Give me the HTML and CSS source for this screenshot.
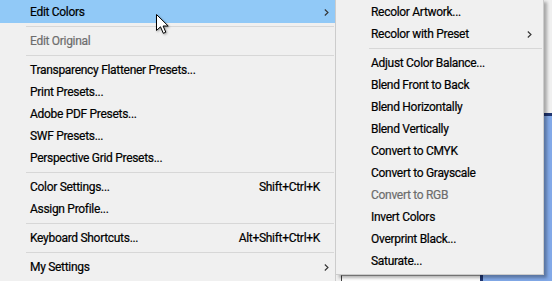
FILE: index.html
```html
<!DOCTYPE html>
<html lang="en">
<head>
    <meta charset="UTF-8">
    <title>Edit menu</title>
    <link rel="stylesheet" href="styles.css">
</head>
<body>
    <div class="desk">
        <div class="desk-box"></div>
        <div class="desk-panel"></div>
    </div>

    <div class="menu main-menu">
        <div class="item first active"><span class="label">Edit Colors</span><span class="key"></span><span class="arrow"><svg width="5" height="7" viewBox="0 0 5 7"><path d="M0.8 0.5 L4 3.5 L0.8 6.5" /></svg></span></div>
        <div class="sep"></div>
        <div class="item disabled"><span class="label">Edit Original</span><span class="key"></span><span class="arrow"></span></div>
        <div class="sep"></div>
        <div class="item"><span class="label">Transparency Flattener Presets...</span><span class="key"></span><span class="arrow"></span></div>
        <div class="item"><span class="label">Print Presets...</span><span class="key"></span><span class="arrow"></span></div>
        <div class="item"><span class="label">Adobe PDF Presets...</span><span class="key"></span><span class="arrow"></span></div>
        <div class="item"><span class="label">SWF Presets...</span><span class="key"></span><span class="arrow"></span></div>
        <div class="item"><span class="label">Perspective Grid Presets...</span><span class="key"></span><span class="arrow"></span></div>
        <div class="sep"></div>
        <div class="item"><span class="label">Color Settings...</span><span class="key">Shift+Ctrl+K</span><span class="arrow"></span></div>
        <div class="item"><span class="label">Assign Profile...</span><span class="key"></span><span class="arrow"></span></div>
        <div class="sep"></div>
        <div class="item"><span class="label">Keyboard Shortcuts...</span><span class="key">Alt+Shift+Ctrl+K</span><span class="arrow"></span></div>
        <div class="sep"></div>
        <div class="item"><span class="label">My Settings</span><span class="key"></span><span class="arrow"><svg width="5" height="7" viewBox="0 0 5 7"><path d="M0.8 0.5 L4 3.5 L0.8 6.5" /></svg></span></div>
    </div>

    <div class="menu sub-menu">
        <div class="item"><span class="label">Recolor Artwork...</span><span class="arrow"></span></div>
        <div class="item"><span class="label">Recolor with Preset</span><span class="arrow"><svg width="5" height="7" viewBox="0 0 5 7"><path d="M0.8 0.5 L4 3.5 L0.8 6.5" /></svg></span></div>
        <div class="sep"></div>
        <div class="item"><span class="label">Adjust Color Balance...</span><span class="arrow"></span></div>
        <div class="item"><span class="label">Blend Front to Back</span><span class="arrow"></span></div>
        <div class="item"><span class="label">Blend Horizontally</span><span class="arrow"></span></div>
        <div class="item"><span class="label">Blend Vertically</span><span class="arrow"></span></div>
        <div class="item"><span class="label">Convert to CMYK</span><span class="arrow"></span></div>
        <div class="item"><span class="label">Convert to Grayscale</span><span class="arrow"></span></div>
        <div class="item disabled"><span class="label">Convert to RGB</span><span class="arrow"></span></div>
        <div class="item"><span class="label">Invert Colors</span><span class="arrow"></span></div>
        <div class="item"><span class="label">Overprint Black...</span><span class="arrow"></span></div>
        <div class="item"><span class="label">Saturate...</span><span class="arrow"></span></div>
    </div>

    <svg class="cursor" width="14" height="21" viewBox="0 0 14 21">
        <path d="M0.5 0.5 V16.5 L4.5 12.8 L7.3 19.3 L9.8 18.2 L7.1 12 H12.2 Z" />
    </svg>
</body>
</html>
```

FILE: styles.css
```css
* {
    box-sizing: border-box;
}

html, body {
    margin: 0;
    height: 100%;
}

body {
    position: relative;
    overflow: hidden;
    font-family: Roboto, "Liberation Sans", sans-serif;
    font-size: 12px;
    letter-spacing: -0.3px;
    color: #000;
    background: #f0f0f0;
    -webkit-text-stroke: 0.2px currentColor;
}

/* window underneath the menus */
.desk {
    display: grid;
    grid-template-columns: 341px 139px 1fr;
    grid-template-rows: 113px 162px 1fr;
    height: 100%;
}

.desk-box {
    grid-column: 2;
    grid-row: 3;
    background: #fff;
    border-top: 1px solid #a0a0a0;
    border-left: 1px solid #404040;
}

.desk-panel {
    grid-column: 3;
    grid-row: 2 / 4;
    background: #82a9e8;
    border-top: 3px solid #1f3570;
    border-left: 3px solid #1f3570;
}

/* menus */
.menu {
    position: absolute;
    top: 0;
    background: #f0f0f0;
}

.main-menu {
    left: 0;
    width: 336px;
    height: 100%;
    border-right: 1px solid #cccccc;
}

.sub-menu {
    left: 336px;
    top: -1px;
    width: 208px;
    height: 276px;
    padding-top: 1px;
    border: 1px solid #cccccc;
    border-left: none;
    box-shadow: 3px 3px 3px rgba(0, 0, 0, 0.3);
}

.item {
    display: flex;
    align-items: center;
    height: 22px;
    padding-left: 30px;
    padding-right: 6px;
    white-space: nowrap;
}

.sub-menu .item {
    padding-left: 35px;
    padding-right: 11px;
}

.item.first {
    height: 23px;
    padding-top: 1px;
}

.item.active {
    background: #91c9f7;
}

.item.disabled {
    color: #6d6d6d;
}

.label {
    flex: 1;
}

.arrow {
    display: flex;
    width: 5px;
    margin-left: 4px;
}

.arrow svg path {
    fill: none;
    stroke: #333;
    stroke-width: 1.1;
}

.sep {
    height: 0;
    margin: 3px 1px 3px 26px;
    border-top: 1px solid #d7d7d7;
}

.sub-menu .sep {
    margin-left: 33px;
}

.cursor {
    position: absolute;
    left: 156px;
    top: 14px;
    filter: drop-shadow(1px 1px 1px rgba(0, 0, 0, 0.35));
}

.cursor path {
    fill: #fff;
    stroke: #000;
    stroke-width: 1;
    stroke-linejoin: miter;
}
```
